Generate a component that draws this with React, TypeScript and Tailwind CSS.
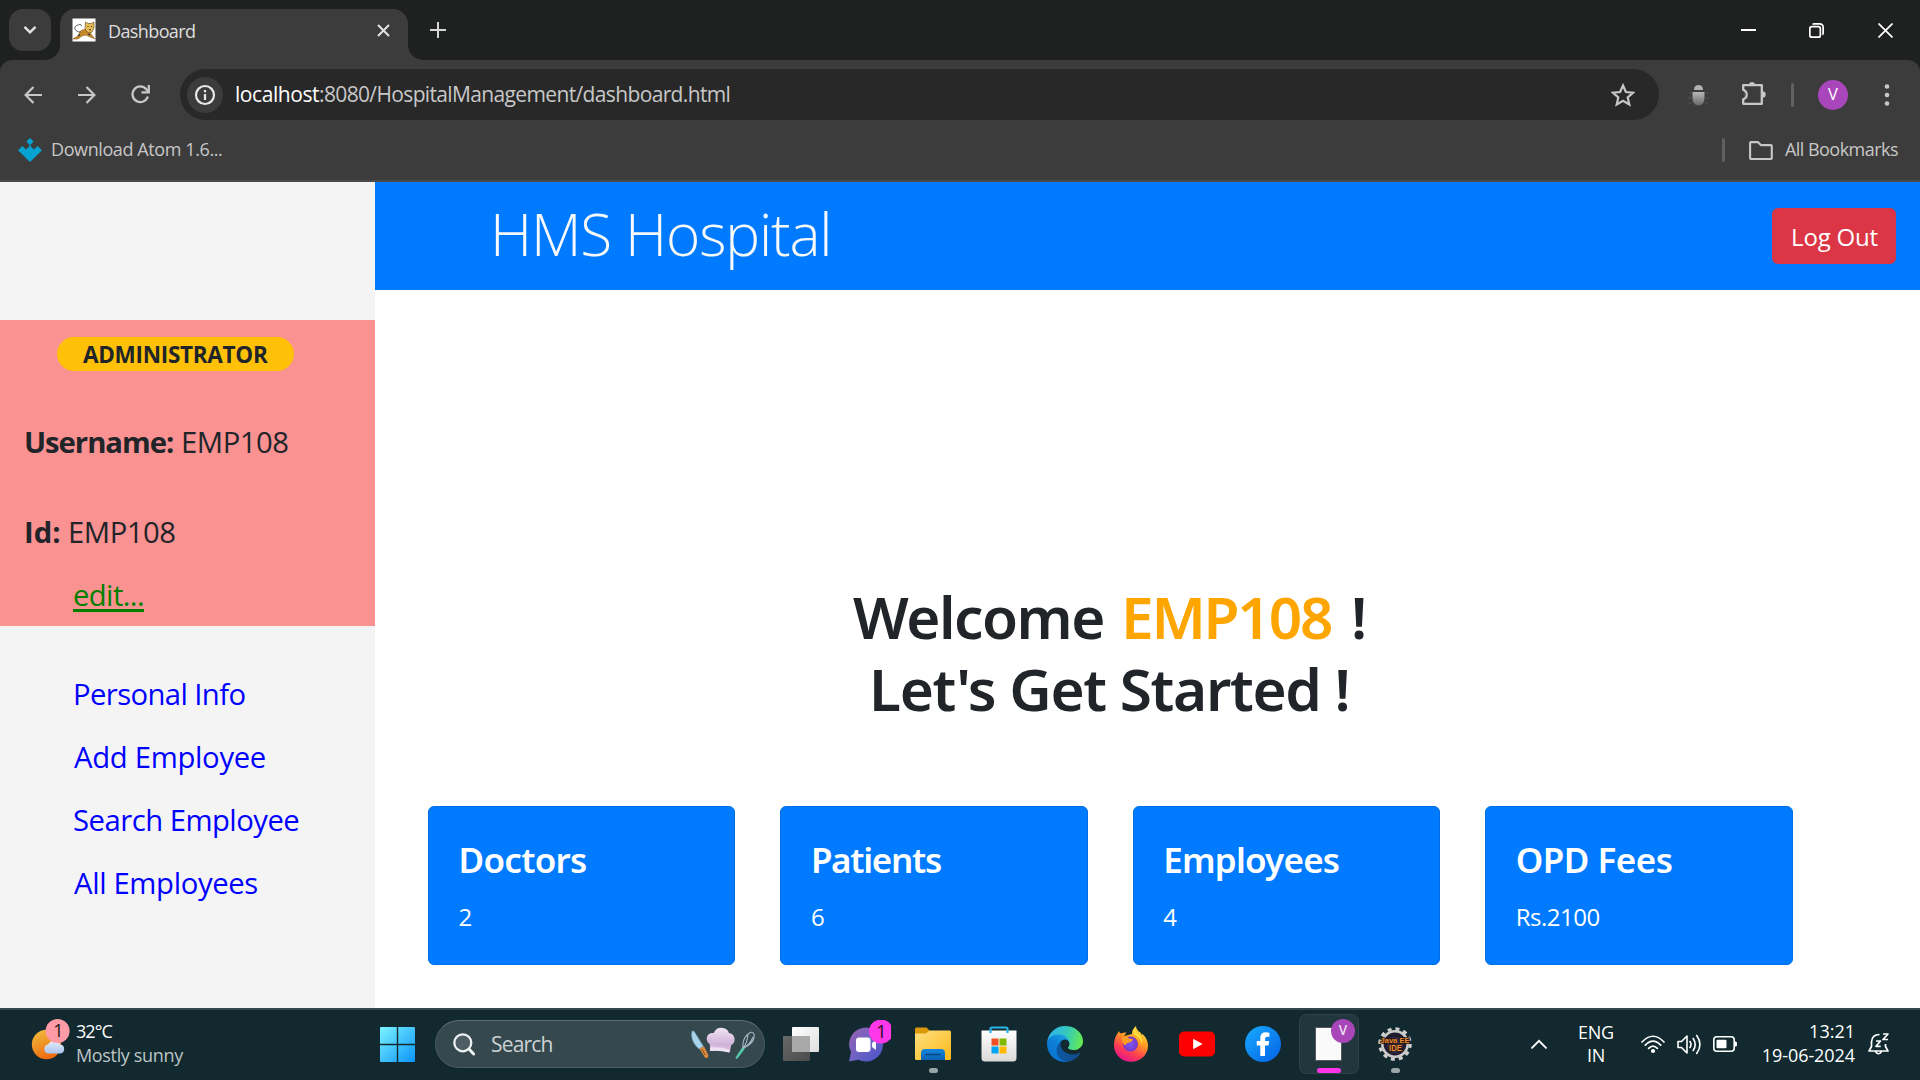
import React from "react";

function ChromeTopBar() {
  return (
    <div className="flex h-[60px] items-center bg-[#1f2120] text-[#dfdfdf]">
      <div className="ml-[9px] flex h-[42px] w-[42px] items-center justify-center rounded-[14px] bg-[#3c3c3c]">
        <svg width="14" height="10" viewBox="0 0 14 10" fill="none" stroke="#e3e3e3" strokeWidth="2.4">
          <path d="M1.5 1.8 7 7.4l5.500-5.600" />
        </svg>
      </div>
      <div className="relative ml-[9px] mt-[9px] flex h-[51px] w-[348px] items-center rounded-t-[15px] bg-[#3c3c3c]">
        <svg className="absolute -left-[15px] bottom-0" width="15" height="15" viewBox="0 0 15 15">
          <path d="M15 0v15H0A15 15 0 0 0 15 0Z" fill="#3c3c3c" />
        </svg>
        <svg className="absolute -right-[15px] bottom-0" width="15" height="15" viewBox="0 0 15 15">
          <path d="M0 0v15h15A15 15 0 0 1 0 0Z" fill="#3c3c3c" />
        </svg>
        <svg className="mb-[9px] ml-3 shrink-0" width="24" height="24" viewBox="0 0 24 24">
          <rect x=".5" y=".5" width="23" height="23" fill="#fff" />
          <path d="M1 21c2-2 5-2 6-5 1-4 3-4 7-5l4 2 1 3 4 5-5-2-4-2-4 1-4 3z" fill="#c8892b" stroke="#7a5218" strokeWidth=".5" />
          <path d="m13 10 .5-6 2.500 1.500h3L22 4v6l-2 4-3 1-3-2z" fill="#e6bb58" stroke="#5b4318" strokeWidth=".6" />
          <path d="M15.500 8.500h1m2.500 0h1m-3 3 1 .5 1-.5" stroke="#4a3210" strokeWidth="1" fill="none" />
          <path d="M9 14c-4 0-7-2-6-5 1-2.500 4-1.500 5-3l2 2" fill="none" stroke="#555" strokeWidth=".9" />
          <path d="m6 18 2-1.500m8-.5 2 1" stroke="#333" strokeWidth="1.300" />
        </svg>
        <span className="mb-[7px] ml-3 text-[18px] leading-6 tracking-[-0.61px]">Dashboard</span>
        <svg className="mb-[9px] ml-auto mr-[18px]" width="13" height="13" viewBox="0 0 13 13" stroke="#e3e3e3" strokeWidth="2">
          <path d="m1 1 11 11M12 1 1 12" />
        </svg>
      </div>
      <svg className="ml-[22px]" width="16" height="16" viewBox="0 0 16 16" stroke="#d6d6d6" strokeWidth="2">
        <path d="M8 0v16M0 8h16" />
      </svg>
      <svg className="ml-auto" width="15" height="2" viewBox="0 0 15 2">
        <rect width="15" height="2" fill="#fff" />
      </svg>
      <svg className="ml-[53px]" width="15" height="15" viewBox="0 0 15 15" fill="none" stroke="#fff" strokeWidth="1.700">
        <rect x=".85" y="3.650" width="10.500" height="10.500" rx="2" />
        <path d="M3.500 1.200Q4.300.85 5.200.85H10.500Q14.150.85 14.150 4.500V9.500Q14.150 10.800 13.500 11.700" />
      </svg>
      <svg className="ml-[54px] mr-[27px]" width="15" height="15" viewBox="0 0 15 15" stroke="#fff" strokeWidth="1.700">
        <path d="m.5.5 14 14m0-14-14 14" />
      </svg>
    </div>
  );
}

function AddressRow() {
  return (
    <div className="flex h-[69px] items-center">
      <svg className="ml-6 shrink-0" width="18" height="18" viewBox="0 0 18 18" fill="none" stroke="#c7c7c7" strokeWidth="2.200">
        <path d="M18 9H2M9.500 1 1.600 9l7.900 8" />
      </svg>
      <svg className="ml-9 shrink-0" width="18" height="18" viewBox="0 0 18 18" fill="none" stroke="#c7c7c7" strokeWidth="2.200">
        <path d="M0 9h16M8.500 1l7.900 8-7.900 8" />
      </svg>
      <svg className="ml-[35px] shrink-0" width="19" height="19" viewBox="0 0 19 19" fill="none" stroke="#c7c7c7" strokeWidth="2.300">
        <path d="M16.800 11.500A7.800 7.800 0 1 1 15.500 4.500L17 6.300" />
        <path d="M17.800 0v7.300h-7.300" />
      </svg>
      <div className="ml-[30px] flex h-[51px] w-[1479px] items-center rounded-full bg-[#282828]">
        <div className="ml-[7px] flex h-[36px] w-[36px] items-center justify-center rounded-full bg-[#3c3c3c]">
          <svg width="22" height="22" viewBox="0 0 22 22" fill="none" stroke="#e8e8e8" strokeWidth="2.200">
            <circle cx="11" cy="11" r="9" />
            <path d="M11 10v6M11 6v2.200" />
          </svg>
        </div>
        <span className="mb-[2px] ml-3 whitespace-pre text-[21px] leading-7 tracking-[-0.640px] text-[#c7c7c7]">
          <span className="tracking-[-0.440px] text-white">localhost</span>:8080/HospitalManagement/dashboard.html
        </span>
        <svg className="ml-auto mr-6" width="24" height="24" viewBox="0 0 24 24" fill="none" stroke="#c7c7c7" strokeWidth="2.200">
          <path d="m12 2.500 2.900 6.500 7.100.7-5.300 4.700 1.600 7L12 17.700 5.700 21.400l1.600-7L2 9.700 9.100 9z" />
        </svg>
      </div>
      <svg className="ml-[29px] shrink-0" width="21" height="22" viewBox="0 0 21 22">
        <path d="M6 6q0-5 4.500-5T15 6z" fill="#b0b0b0" />
        <path d="M4.500 8h12v5q0 8.500-6 8.500t-6-8.500z" fill="url(#bugBody)" />
        <path d="M1 9h3m-4 5h4m-3 5h3m14-10h2m-3 5h4m-4 5h3" stroke="#555" strokeWidth="1.200" />
        <defs>
          <linearGradient id="bugBody" x1="0" y1="0" x2="0" y2="1">
            <stop stopColor="#b8b8b8" />
            <stop offset="1" stopColor="#666" />
          </linearGradient>
        </defs>
      </svg>
      <svg className="-mt-[4px] ml-[31px] shrink-0" width="26" height="26" viewBox="0 0 26 26">
        <path d="M3.200 5.200h18.600v18.600H3.200z" fill="none" stroke="#c7c7c7" strokeWidth="2.300" strokeLinejoin="round" />
        <path d="M8.500 4.500a3.700 3.700 0 0 1 7 0zM22.500 11.300a3.200 3.200 0 0 1 0 6.400z" fill="#c7c7c7" />
        <path d="M0 10.500h4.500v8H0z" fill="#3c3c3c" />
        <path d="M3 9.800c5 1 5 8.500 0 9.500" fill="none" stroke="#c7c7c7" strokeWidth="2.200" />
      </svg>
      <div className="ml-[25px] h-6 w-[3px] rounded-full bg-[#606060]" />
      <div className="ml-6 flex h-[30px] w-[30px] items-center justify-center rounded-full bg-[#aa46bb] text-[16.500px] leading-none text-white">V</div>
      <svg className="ml-[36px]" width="6" height="24" viewBox="0 0 6 24" fill="#c7c7c7">
        <circle cx="3" cy="3.500" r="2.300" />
        <circle cx="3" cy="12" r="2.300" />
        <circle cx="3" cy="20.500" r="2.300" />
      </svg>
    </div>
  );
}

function BookmarkRow() {
  return (
    <div className="flex h-[42px] items-center text-[18px] leading-6 text-[#c7c7c7]">
      <svg className="ml-[18px] shrink-0" width="24" height="24" viewBox="0 0 24 24" fill="#05a3d2">
        <path d="m12 0 3.600 3.600L12 7.200 8.400 3.600z" />
        <path d="m4.500 8 3.500 3.500 2.300-2.300h.9V7h1.600v2.200h.9l2.300 2.300L19.500 8 24 12.300 12 24 0 12.300z" />
      </svg>
      <span className="mb-[2px] ml-[9px] tracking-[-0.400px]">Download Atom 1.6...</span>
      <div className="ml-auto h-6 w-[3px] rounded-full bg-[#606060]" />
      <svg className="ml-6" width="24" height="19" viewBox="0 0 24 19" fill="none" stroke="#c7c7c7" strokeWidth="2.100" strokeLinejoin="round">
        <path d="M1.100 17V2.100q0-1 1-1h6.700l3 3h10q1 0 1 1V17q0 1-1 1H2.100q-1 0-1-1z" />
      </svg>
      <span className="mb-[2px] ml-3 mr-[22px] tracking-[-0.530px]">All Bookmarks</span>
    </div>
  );
}

const menu = [
  { label: "Personal Info", cls: "tracking-[-0.600px] ml-[73px]" },
  { label: "Add Employee", cls: "tracking-[-0.300px] ml-[74px]" },
  { label: "Search Employee", cls: "tracking-[-0.510px] ml-[73px]" },
  { label: "All Employees", cls: "tracking-[-0.350px] ml-[74px]" },
];

function Sidebar() {
  return (
    <aside className="w-[375px] shrink-0 bg-[#f4f4f4] pt-[138px] text-[29.250px] leading-[45px] text-[#212529]">
      <div className="h-[306px] bg-[#fa9292] pt-[17px]">
        <div className="ml-[57px] h-[34px] w-[237px] rounded-full bg-[#ffc107] pl-[26px] text-[22.500px] font-bold leading-[36px] tracking-[-0.280px]">
          ADMINISTRATOR
        </div>
        <div className="ml-6 mt-[49px] flex">
          <span className="w-[157px] font-bold tracking-[-1.020px]">Username:</span>
          <span className="tracking-[-0.450px]">EMP108</span>
        </div>
        <div className="ml-6 mt-[45px] flex">
          <span className="w-[44px] font-bold">Id:</span>
          <span className="tracking-[-0.450px]">EMP108</span>
        </div>
        <a className="ml-[73px] mt-[18px] block w-[71px] tracking-[-0.600px] text-[#008000] underline decoration-[3px] underline-offset-[3px]">edit...</a>
      </div>
      <nav className="mt-[46px] flex flex-col gap-[18px] text-[#0000ff]">
        {menu.map((m) => (
          <a key={m.label} className={m.cls}>{m.label}</a>
        ))}
      </nav>
    </aside>
  );
}

const stats = [
  { title: "Doctors", value: "2", cls: "tracking-[-0.700px]" },
  { title: "Patients", value: "6", cls: "tracking-[-1.300px]" },
  { title: "Employees", value: "4", cls: "tracking-[-0.800px]" },
  { title: "OPD Fees", value: "Rs.2100", cls: "tracking-[-0.500px]" },
];

function Main() {
  return (
    <div className="flex min-w-0 grow flex-col bg-white text-[#212529]">
      <header className="flex h-[108px] shrink-0 items-start justify-between bg-[#007bff]">
        <h1 className="ml-[115px] mt-[15px] text-[58.500px] font-light leading-[72px] tracking-[-1.150px] text-[#f8f9fa]">HMS Hospital</h1>
        <button className="mr-[24px] mt-[26px] h-[56px] w-[124px] rounded-[6px] bg-[#dc3545] pl-[1px] pt-[2px] text-[24px] leading-9 tracking-[-0.190px] text-white">Log Out</button>
      </header>
      <div className="mt-[290px] font-['Noto_Sans'] text-[58.500px] font-semibold leading-[72px]">
        <div className="ml-[478px] flex">
          <span className="w-[268px] shrink-0 tracking-[-1.450px]">Welcome</span>
          <span className="w-[230px] shrink-0 tracking-[-2.200px] text-[#ffa500]">EMP108</span>
          <span>!</span>
        </div>
        <div className="ml-[494px] whitespace-nowrap tracking-[-1.300px]">Let's Get Started !</div>
      </div>
      <div className="ml-[53px] mt-[82px] flex gap-[45px] text-white">
        {stats.map((s) => (
          <div key={s.title} className="h-[159px] w-[307.400px] rounded-[6px] border border-[#006fe6] bg-[#007bff] pl-[29.500px] pt-[31px]">
            <div className={`font-['Noto_Sans'] text-[35px] font-semibold leading-[44px] ${s.cls}`}>{s.title}</div>
            <div className="mt-[17px] text-[24px] leading-[36px] tracking-[-0.500px]">{s.value}</div>
          </div>
        ))}
      </div>
    </div>
  );
}

function Weather() {
  return (
    <div className="flex w-[380px] items-center">
      <svg className="mb-[2px] ml-[30px]" width="42" height="48" viewBox="0 0 42 48">
        <defs>
          <linearGradient id="sun" x1=".3" y1="0" x2=".7" y2="1">
            <stop stopColor="#efb83a" />
            <stop offset="1" stopColor="#f0640c" />
          </linearGradient>
          <linearGradient id="cloud" x1="0" y1="0" x2="0" y2="1">
            <stop stopColor="#e8effb" />
            <stop offset="1" stopColor="#a9c4ee" />
          </linearGradient>
        </defs>
        <circle cx="16.500" cy="25.500" r="14.700" fill="url(#sun)" />
        <path d="M18 34.500a4.600 4.600 0 0 1 0-9 7 7 0 0 1 12.500 0 4.600 4.600 0 0 1 0 9z" fill="url(#cloud)" />
        <circle cx="27.600" cy="12" r="12" fill="#ff9ba6" />
        <text x="28.500" y="18" textAnchor="middle" fontSize="18" fill="#1a1a1a" fontFamily="Open Sans">1</text>
      </svg>
      <div className="-mt-[3px] ml-1 text-[18px] leading-6">
        <div className="tracking-[-0.930px] text-white">32°C</div>
        <div className="tracking-[-0.340px] text-[#bcc4c6]">Mostly sunny</div>
      </div>
    </div>
  );
}

function StartIcon() {
  return (
    <svg width="35" height="35" viewBox="0 0 35 35">
      <defs>
        <linearGradient id="win" x1="0" y1="0" x2="1" y2="1">
          <stop stopColor="#7cf3ff" />
          <stop offset="1" stopColor="#0a94fb" />
        </linearGradient>
      </defs>
      <path d="M1 0h15.800v16.800H0V1q0-1 1-1zM18.200 0H34q1 0 1 1v15.800H18.200zM0 18.200h16.800V35H1q-1 0-1-1zM18.200 18.200H35V34q0 1-1 1H18.200z" fill="url(#win)" />
    </svg>
  );
}

function SearchBox() {
  return (
    <div className="ml-5 flex h-[48px] w-[330px] items-center rounded-full border border-[#4a5c61] border-t-[#5e6f73] bg-[#34484d]">
      <svg className="ml-[17px]" width="22" height="23" viewBox="0 0 22 23" fill="none" stroke="#eef1f2" strokeWidth="2.300" strokeLinecap="round">
        <circle cx="9.800" cy="9.800" r="8.500" fill="#4c5e63" />
        <path d="m16 16 4.700 5" strokeWidth="3" />
      </svg>
      <span className="mb-[1px] ml-[16px] text-[21px] leading-7 tracking-[-0.820px] text-[#ccd2d3]">Search</span>
      <svg className="-mt-[1px] ml-auto mr-[8px]" width="66" height="34" viewBox="0 0 66 34">
        <defs>
          <linearGradient id="hat" x1="0" y1="0" x2="0" y2="1">
            <stop stopColor="#f1e4f4" />
            <stop offset="1" stopColor="#cfaed6" />
          </linearGradient>
        </defs>
        <path d="M2 4.500Q3 3 4.500 5l9 14.500-4.500 2.500Q2 16 1.500 8z" fill="#a8d3ea" stroke="#6f9db8" strokeWidth=".6" />
        <path d="m9.500 21.800 4.500-2.500 4.200 8.500q.8 3.200-2 3.200-1.500 0-2.500-2.500z" fill="#d98a3d" />
        <path d="m12 22 3 6" stroke="#8a4f1d" strokeWidth="1" />
        <path d="m19.500 14 .8 10q10-1.500 19.500 1.500l2.200-12z" fill="#d5bade" />
        <path d="M21.500 17.500q-5-1-4.800-6.500 1-5.500 7-5Q26 .500 31.500.700q6 .3 7.500 5.300 6 1 5.500 7.500-.5 4-4.500 5-9 .500-18.500-1z" fill="url(#hat)" />
        <path d="M20 20.500q10-1 19.500 2l-.5 3q-9.500-2.500-19-1.500z" fill="#efe1f2" />
        <path d="m52.500 20 2.500 1.500-7.500 10q-2 1-2-1z" fill="#54c9ab" />
        <path d="M53 21q-1-8 4-13t7-1q1 6-4 10t-7 4zM53 21q4-4 5-13.500M53 21q7-3 10-11" fill="none" stroke="#a5b8c6" strokeWidth="1.100" />
      </svg>
    </div>
  );
}

function TaskView() {
  return (
    <svg width="36" height="34" viewBox="0 0 36 34">
      <defs>
        <linearGradient id="tvA" x1="0" y1="0" x2="1" y2="1">
          <stop stopColor="#686868" />
          <stop offset="1" stopColor="#4b4b4b" />
        </linearGradient>
        <linearGradient id="tvB" x1="0" y1="0" x2="1" y2="1">
          <stop stopColor="#fff" />
          <stop offset="1" stopColor="#dedede" />
        </linearGradient>
      </defs>
      <rect x="9" y="0" width="27" height="25" rx="1" fill="url(#tvB)" />
      <rect x="0" y="9" width="27" height="25" rx="1" fill="url(#tvA)" />
      <rect x="9" y="9" width="18" height="16" fill="#a8a8a8" />
    </svg>
  );
}

function ChatIcon() {
  return (
    <svg width="48" height="48" viewBox="-1 0 48 48">
      <defs>
        <linearGradient id="chat" x1="0" y1="0" x2="1" y2="1">
          <stop stopColor="#9a5fb0" />
          <stop offset=".5" stopColor="#6f63c4" />
          <stop offset="1" stopColor="#4652c8" />
        </linearGradient>
      </defs>
      <path d="M5 24.500a17 17 0 1 1 9.500 15.300L5 41.500l2-9.500a17 17 0 0 1-2-7.500z" fill="url(#chat)" />
      <rect x="12" y="17.500" width="14.500" height="14.500" rx="3" fill="#fff" />
      <path d="m28 23 4-3v10l-4-3z" fill="#fff" />
      <circle cx="37" cy="12" r="12" fill="#ff37ea" transform="translate(0 -.5)" />
      <text x="37.500" y="17.500" textAnchor="middle" fontSize="18" fill="#111" fontFamily="Open Sans">1</text>
    </svg>
  );
}

function ExplorerIcon() {
  return (
    <svg width="36" height="34" viewBox="0 0 36 34">
      <defs>
        <linearGradient id="fold" x1="0" y1="0" x2="1" y2="1">
          <stop stopColor="#ffe181" />
          <stop offset="1" stopColor="#fcb718" />
        </linearGradient>
        <linearGradient id="foldB" x1="0" y1="0" x2="0" y2="1">
          <stop stopColor="#1288dc" />
          <stop offset="1" stopColor="#0c62b4" />
        </linearGradient>
      </defs>
      <path d="M0 2q0-1.500 1.500-1.500h10L15 4v4H0z" fill="#dd9a08" />
      <path d="M0 6.500h11l3.500-3H34.500q1.500 0 1.500 1.500V31.500q0 1.500-1.500 1.500H1.500Q0 33 0 31.500z" fill="url(#fold)" />
      <path d="M6 33v-7q0-4 4-4h16q4 0 4 4v7z" fill="url(#foldB)" />
      <path d="M11 27.500h14" stroke="#0a4684" strokeWidth="1.600" strokeLinecap="round" />
    </svg>
  );
}

function StoreIcon() {
  return (
    <svg className="mr-[1px]" width="36" height="36" viewBox="0 0 36 36">
      <defs>
        <linearGradient id="bag" x1="0" y1="0" x2="0" y2="1">
          <stop stopColor="#fff" />
          <stop offset="1" stopColor="#d9d9d9" />
        </linearGradient>
      </defs>
      <path d="M.5 4.500h35V32q0 3.500-3.500 3.500H4Q.5 35.500.5 32z" fill="url(#bag)" />
      <path d="M9.500 7V3q0-1.500 1.500-1.500h14q1.500 0 1.500 1.500v4" fill="none" stroke="#29b2e8" strokeWidth="2.200" />
      <path d="M10.500 12.500h7v7h-7z" fill="#f25022" />
      <path d="M18.500 12.500h7v7h-7z" fill="#7fba00" />
      <path d="M10.500 20.500h7v7h-7z" fill="#00a4ef" />
      <path d="M18.500 20.500h7v7h-7z" fill="#ffb900" />
    </svg>
  );
}

function EdgeIcon() {
  return (
    <svg width="36" height="36" viewBox="0 0 256 256">
      <defs>
        <linearGradient id="edgeA" x1="63" y1="178" x2="240" y2="178" gradientUnits="userSpaceOnUse">
          <stop stopColor="#0c59a4" />
          <stop offset="1" stopColor="#114a8b" />
        </linearGradient>
        <linearGradient id="edgeB" x1="150" y1="90" x2="45" y2="225" gradientUnits="userSpaceOnUse">
          <stop stopColor="#1b9de2" />
          <stop offset=".5" stopColor="#0c7fd8" />
          <stop offset="1" stopColor="#0a74cf" />
        </linearGradient>
        <linearGradient id="edgeC" x1="10" y1="60" x2="250" y2="120" gradientUnits="userSpaceOnUse">
          <stop stopColor="#30b4e6" />
          <stop offset=".5" stopColor="#34c8bd" />
          <stop offset="1" stopColor="#66eb50" />
        </linearGradient>
      </defs>
      <path d="M231 190.500c-3.400 1.800-6.900 3.400-10.500 4.700a101.900 101.900 0 0 1-35.900 6.500c-47.300 0-88.500-32.500-88.500-74.300a31.500 31.500 0 0 1 16.400-27.300c-42.800 1.800-53.800 46.400-53.800 72.500 0 73.900 68.100 81.400 82.800 81.400 7.900 0 19.800-2.300 27-4.600l1.300-.4a128.300 128.300 0 0 0 66.600-52.800 4 4 0 0 0-5.400-5.700z" fill="url(#edgeA)" />
      <path d="M105.700 241.400a79.200 79.200 0 0 1-22.700-21.300 80.700 80.700 0 0 1 29.500-120c3.200-1.500 8.500-4.100 15.600-4a32.400 32.400 0 0 1 25.700 13 31.900 31.900 0 0 1 6.300 18.700c0-.2 24.500-79.600-80-79.600-43.900 0-80 41.700-80 78.200a130.200 130.200 0 0 0 12.100 56 128 128 0 0 0 156.400 67 75.500 75.500 0 0 1-62.800-8z" fill="url(#edgeB)" />
      <path d="M152.300 148.900c-.8 1-3.300 2.500-3.300 5.700 0 2.600 1.700 5.100 4.700 7.200 14.400 10 41.500 8.700 41.500 8.700a59.600 59.600 0 0 0 30.300-8.400A61.400 61.400 0 0 0 256 109c.3-22.500-8-37.400-11.300-44C223.300 23.200 177.700 0 128 0A128 128 0 0 0 0 126.200c.5-36.500 36.800-66 80-66 3.500 0 23.500.3 42 10 16.300 8.600 24.900 19 30.800 29.200 6.200 10.700 7.300 24.100 7.300 29.500 0 5.300-2.700 13.300-7.800 20z" fill="url(#edgeC)" />
    </svg>
  );
}

function FirefoxIcon() {
  return (
    <svg width="36" height="36" viewBox="0 0 36 36">
      <defs>
        <linearGradient id="ffA" x1=".8" y1="0" x2=".3" y2="1">
          <stop stopColor="#fff04a" />
          <stop offset=".4" stopColor="#ff9a20" />
          <stop offset=".72" stopColor="#fc3d52" />
          <stop offset="1" stopColor="#e5138f" />
        </linearGradient>
        <radialGradient id="ffB">
          <stop stopColor="#7a5cf5" />
          <stop offset="1" stopColor="#7a33c8" />
        </radialGradient>
      </defs>
      <path d="M3.500 9Q5 7 6 5q.5 2 2 2.500 3-1.500 5.500-1L11 10l8-2q0-5 4-8 0 4 5 7l.5 2 1-1q5.500 5 5.500 11.500A17 16 0 0 1 1 20Q1 13 3.500 9z" fill="url(#ffA)" />
      <circle cx="17.500" cy="18" r="7.500" fill="url(#ffB)" />
      <path d="M9 11q5-2 7 1.500l4 .5q-.5 3-4 3.500-3 .5-3.500 3Q9 18 9 11z" fill="#ff9d24" />
      <path d="M22 2q0 4 4 7t3 10q-1-7-7-10-3-3 0-7z" fill="#ffe03f" />
    </svg>
  );
}

function YoutubeIcon() {
  return (
    <svg width="36" height="26" viewBox="0 0 36 26">
      <rect y=".5" width="36" height="25" rx="5" fill="#ff0000" />
      <path d="m14.200 7.800 9.300 5.200-9.300 5.200z" fill="#fff" />
    </svg>
  );
}

function FacebookIcon() {
  return (
    <svg width="36" height="36" viewBox="0 0 36 36">
      <defs>
        <linearGradient id="fb" x1="0" y1="0" x2="1" y2="1">
          <stop stopColor="#18acfe" />
          <stop offset="1" stopColor="#0460e6" />
        </linearGradient>
      </defs>
      <circle cx="18" cy="18" r="18" fill="url(#fb)" />
      <path d="M15.300 30V19.500h-3.600v-4.600h3.600v-3q0-5.600 5.600-5.600 2 0 3.500.4v4h-2q-2.400 0-2.400 2.300v1.900h4.200l-.7 4.600H20V30z" fill="#fff" />
    </svg>
  );
}

function EclipseIcon() {
  return (
    <svg width="36" height="36" viewBox="0 0 36 36">
      <circle cx="18" cy="18" r="15.200" fill="none" stroke="#cfcfcf" strokeWidth="3.200" strokeDasharray="3.980 3.980" />
      <circle cx="18" cy="18" r="12.700" fill="#1f1c30" stroke="#c9c9c9" strokeWidth="2.600" />
      <circle cx="18" cy="19" r="8" fill="#382d52" />
      <text x="18" y="17" textAnchor="middle" fontSize="8" fontWeight="700" fill="#ef8a34" stroke="#241406" strokeWidth="1.500" paintOrder="stroke" textLength="29" lengthAdjust="spacingAndGlyphs" fontFamily="Liberation Sans">Java EE</text>
      <text x="18.500" y="25" textAnchor="middle" fontSize="8.500" fontWeight="700" fill="#ef8a34" stroke="#241406" strokeWidth="1.200" paintOrder="stroke" textLength="13" lengthAdjust="spacingAndGlyphs" fontFamily="Liberation Sans">IDE</text>
    </svg>
  );
}

function Slot({ children, dot }: { children: React.ReactNode; dot?: boolean }) {
  return (
    <div className="relative flex h-[60px] w-[66px] items-center justify-center">
      {children}
      {dot && <div className="absolute bottom-[1px] left-[29px] h-[5px] w-[9px] rounded-full bg-[#9aa5a8]" />}
    </div>
  );
}

function ActivePage() {
  return (
    <div className="relative flex h-[60px] w-[60px] items-center justify-center rounded-[7px] border border-[#2e4248] bg-[#22373d]">
      <svg className="mr-[1px]" width="27" height="34" viewBox="0 0 27 34">
        <rect x=".5" y=".5" width="26" height="33" fill="#fafafa" stroke="#55595a" />
      </svg>
      <div className="absolute left-[31px] top-[4px] flex h-6 w-6 items-center justify-center rounded-full bg-[#a845b8] text-[13.500px] font-semibold leading-none text-[#eddcf0]">V</div>
      <div className="absolute bottom-0 left-[17px] h-[5px] w-6 rounded-full bg-[#ff34e8]" />
    </div>
  );
}

function Tray() {
  return (
    <div className="ml-auto flex items-center text-white">
      <svg width="16" height="10" viewBox="0 0 16 10" fill="none" stroke="#fff" strokeWidth="1.900" strokeLinecap="round">
        <path d="m1 8.800 7-7 7 7" />
      </svg>
      <div className="ml-[29px] w-[40px] text-center text-[18px] leading-[23px] tracking-[-0.280px]">
        <div>ENG</div>
        <div>IN</div>
      </div>
      <svg className="ml-[25px]" width="24" height="19" viewBox="0 0 24 19" fill="none" stroke="#fff" strokeWidth="1.700" strokeLinecap="round">
        <path d="M1 7q11-11.500 22 0M4.300 10.200q7.700-8 15.400 0M7.600 13.300q4.400-4.500 8.800 0" />
        <circle cx="12" cy="16" r="2.100" fill="#fff" stroke="none" />
      </svg>
      <svg className="ml-3" width="25" height="21" viewBox="0 0 25 21" fill="none" stroke="#fff" strokeWidth="1.600" strokeLinecap="round" strokeLinejoin="round">
        <path d="M1 7.500h3.500l5.500-5.500v17l-5.500-5.500H1z" />
        <path d="M13 7.500q2 3 0 6M16.200 4.500q4 6 0 12M19.700 1.500q6.500 9 0 18" />
      </svg>
      <svg className="ml-[11px]" width="25" height="16" viewBox="0 0 25 16" fill="none" stroke="#fff" strokeWidth="1.600">
        <rect x=".8" y=".8" width="20.400" height="14.400" rx="3" />
        <rect x="3.500" y="3.700" width="10" height="8.600" rx="1" fill="#fff" stroke="none" />
        <path d="M21.500 5.500h1q1.500 0 1.500 1.500v2q0 1.500-1.500 1.500h-1z" fill="#fff" stroke="none" />
      </svg>
      <div className="-mt-[3px] ml-[22px] w-[95px] text-right text-[18px] leading-6">
        <div>13:21</div>
        <div className="tracking-[-0.070px]">19-06-2024</div>
      </div>
      <svg className="ml-[13px] mr-[30px]" width="22" height="23" viewBox="0 0 22 23" fill="none" stroke="#fff" strokeWidth="1.700" strokeLinejoin="round">
        <path d="M11.500 1.500Q4 1.500 3.500 9v4.500L1 18h19l-2.500-4.500V11M7.500 18.500q3 4.500 6 0" />
        <path d="M8 8h4.500L8 13.300h4.700M15 1h5l-5 5.500h5" />
      </svg>
    </div>
  );
}

export default function App() {
  return (
    <div className="flex h-[1080px] w-[1920px] flex-col overflow-hidden bg-white font-['Open_Sans','Noto_Sans',sans-serif]">
      <ChromeTopBar />
      <div className="bg-[#1f2120]">
        <div className="h-[122px] rounded-t-[12px] border-b-2 border-[#4a4a4a] bg-[#3c3c3c]">
          <AddressRow />
          <BookmarkRow />
        </div>
      </div>
      <div className="flex h-[826px]">
        <Sidebar />
        <Main />
      </div>
      <footer className="flex h-[72px] items-center border-t-2 border-[#34474c] bg-[#12292f] pb-[2px]">
        <Weather />
        <StartIcon />
        <SearchBox />
        <div className="ml-[3px] flex items-center">
          <Slot><TaskView /></Slot>
          <Slot><ChatIcon /></Slot>
          <Slot dot><ExplorerIcon /></Slot>
          <Slot><StoreIcon /></Slot>
          <Slot><EdgeIcon /></Slot>
          <Slot><FirefoxIcon /></Slot>
          <Slot><YoutubeIcon /></Slot>
          <Slot><FacebookIcon /></Slot>
          <Slot><ActivePage /></Slot>
          <Slot dot><EclipseIcon /></Slot>
        </div>
        <Tray />
      </footer>
    </div>
  );
}
